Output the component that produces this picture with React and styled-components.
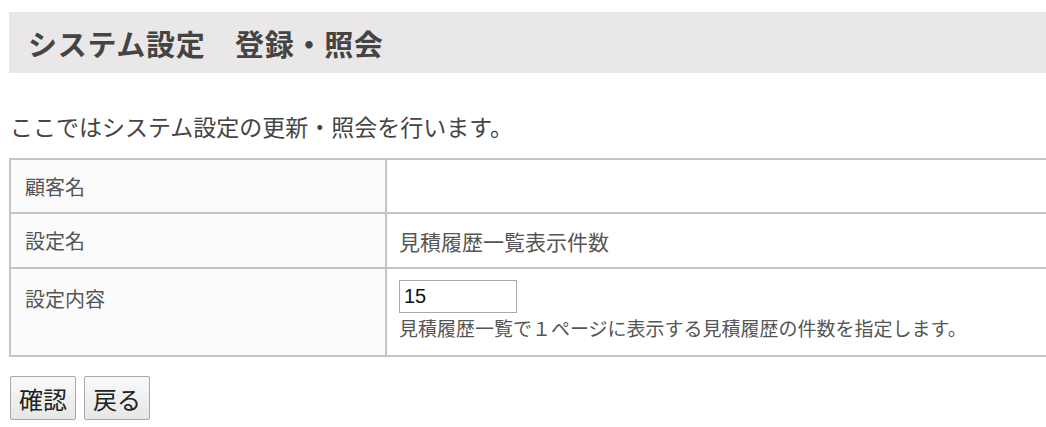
import React from 'react';
import styled, {createGlobalStyle} from 'styled-components';

const GlobalStyle = createGlobalStyle`
    html, body {
        margin: 0;
        padding: 0;
        background: #ffffff;
        overflow: hidden;
    }
    body {
        font-family: "Noto Sans CJK JP", "Noto Sans", sans-serif;
        color: #444444;
    }
`;

const Page = styled.div`
    padding: 12px 0 0 9px;
    width: 1100px;
`;

const Header = styled.h1`
    margin: 0;
    height: 61px;
    display: flex;
    align-items: center;
    padding-left: 19px;
    background: #e9e7e7;
    color: #444444;
    font-size: 29px;
    font-weight: 700;
    letter-spacing: 0.7px;
`;

const Lead = styled.p`
    margin: 38px 0 0 1px;
    font-size: 23px;
    line-height: 30px;
    color: #444444;
`;

const Table = styled.table`
    margin-top: 17px;
    width: 1100px;
    border-collapse: collapse;
    font-size: 20px;
    color: #555555;
`;

const Label = styled.th`
    width: 346px;
    text-align: left;
    font-weight: 400;
    vertical-align: ${p => (p.$top ? 'top' : 'middle')};
    padding: ${p => (p.$top ? '15px 14px' : '0 14px')};
    height: ${p => p.$h}px;
    background: #fbfbfb;
    border: 2px solid #c4c4c4;
`;

const Value = styled.td`
    vertical-align: ${p => (p.$top ? 'top' : 'middle')};
    padding: ${p => (p.$top ? '11px 12px 14px' : '0 12px')};
    border: 2px solid #c4c4c4;
    font-size: ${p => (p.$big ? 21 : 20)}px;
`;

const NumberInput = styled.input`
    display: block;
    box-sizing: border-box;
    width: 118px;
    height: 33px;
    padding: 0 4px;
    border: 1px solid #a9a9a9;
    font-family: "Liberation Sans", Arial, sans-serif;
    font-size: 20px;
    color: #111111;
`;

const Help = styled.div`
    margin-top: 2px;
    font-size: 19px;
    line-height: 26px;
    color: #555555;
    white-space: nowrap;
`;

const Actions = styled.div`
    margin-top: 19px;
    display: flex;
    gap: 8px;
    padding-left: 1px;
`;

const Button = styled.button`
    height: 44px;
    padding: 0 8px;
    border: 1px solid #a8a8a8;
    border-radius: 2px;
    background: linear-gradient(#fafafa, #e6e6e6);
    font-family: "Noto Sans CJK JP", sans-serif;
    font-size: 24px;
    color: #222222;
`;

export default function App() {
    return (
        <Page>
            <GlobalStyle/>
            <Header>システム設定　登録・照会</Header>
            <Lead>ここではシステム設定の更新・照会を行います。</Lead>
            <Table>
                <tbody>
                    <tr>
                        <Label $h={52}>顧客名</Label>
                        <Value></Value>
                    </tr>
                    <tr>
                        <Label $h={53}>設定名</Label>
                        <Value $big>見積履歴一覧表示件数</Value>
                    </tr>
                    <tr>
                        <Label $top>設定内容</Label>
                        <Value $top>
                            <NumberInput defaultValue="15"/>
                            <Help>見積履歴一覧で１ページに表示する見積履歴の件数を指定します。</Help>
                        </Value>
                    </tr>
                </tbody>
            </Table>
            <Actions>
                <Button>確認</Button>
                <Button>戻る</Button>
            </Actions>
        </Page>
    );
}
